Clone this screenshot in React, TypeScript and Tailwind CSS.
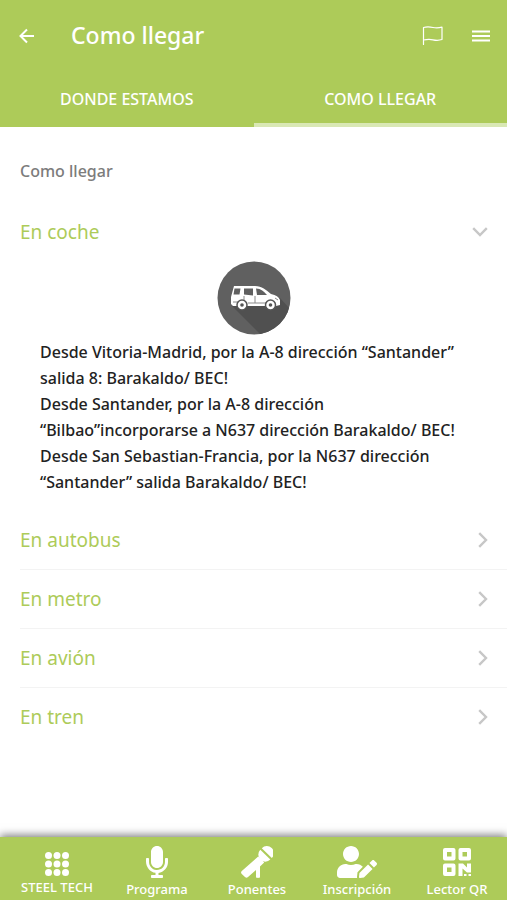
import { useState } from 'react';
import type { ReactNode } from 'react';
import { FaMicrophone, FaUserEdit } from 'react-icons/fa';

function BackIcon() {
  return (
    <svg viewBox="0 0 16 16" className="w-4 h-4" fill="none" stroke="currentColor" strokeWidth="2">
      <path d="M15 8H2M8 1.5 1.5 8 8 14.5" />
    </svg>
  );
}

function FlagIcon() {
  return (
    <svg viewBox="0 0 22 20" className="w-[22px] h-5" fill="none" stroke="currentColor" strokeWidth="1.2" strokeLinecap="round" strokeLinejoin="round">
      <path d="M1.500 18.500V1.500C5 .5 8 .8 11 1.500s6 .5 9-.3V13.500c-3 1-6 1-9 .3s-6-.6-9.500.2" />
    </svg>
  );
}

function MenuIcon() {
  return (
    <svg viewBox="0 0 18 14" className="w-[18px] h-3.5" stroke="currentColor" strokeWidth="2">
      <path d="M0 2.500h18M0 7h18M0 11.500h18" />
    </svg>
  );
}

function Chevron({ open }: { open: boolean }) {
  return open ? (
    <svg viewBox="0 0 16 10" className="w-4 h-2.5" fill="none" stroke="#c7c7c7" strokeWidth="2.400">
      <path d="m1.200 1.200 6.800 6.800 6.800-6.800" />
    </svg>
  ) : (
    <svg viewBox="0 0 10 16" className="w-2.5 h-4" fill="none" stroke="#c7c7c7" strokeWidth="2.400">
      <path d="m1.200 1.200 6.800 6.800-6.800 6.800" />
    </svg>
  );
}

function CarIcon() {
  return (
    <svg viewBox="0 0 74 74" className="w-[74px] h-[74px]">
      <clipPath id="disc">
        <circle cx="37" cy="37" r="36.500" />
      </clipPath>
      <circle cx="37" cy="37" r="36.500" fill="#606060" />
      <path clipPath="url(#disc)" fill="#505050" d="M15 45 44 74H74V49L63 37Z" />
      <path fill="#fff" d="M17 25h21c7 0 11 4 16 8 5 1 8 3 9 6v5l-4 1H16l-2-2v-7z" />
      <path fill="#606060" d="M17.500 27.500h6l-1 6h-6zM27 27.500h9v7l-9-1zM39 27.500c5 0 8 3 11 6.500h-10z" />
      <path fill="none" stroke="#8a8a8a" strokeWidth="1" d="M16 41h6M27 35v6M38 35v7M31 42h18M58 37l3 2" />
      <g fill="#fff" stroke="#555" strokeWidth="1.500">
        <circle cx="25" cy="44" r="5" />
        <circle cx="53.500" cy="44" r="5" />
      </g>
      <g fill="#555">
        <circle cx="25" cy="44" r="1.800" />
        <circle cx="53.500" cy="44" r="1.800" />
      </g>
    </svg>
  );
}

function DotsIcon() {
  return (
    <svg viewBox="0 0 24 24" className="w-6 h-6" fill="currentColor">
      {[3.5, 12, 20.5].map((y) => [3.5, 12, 20.5].map((x) => <circle key={`${x}-${y}`} cx={x} cy={y} r="3.500" />))}
    </svg>
  );
}

function HandMicIcon() {
  return (
    <svg viewBox="0 0 32 32" className="w-8 h-8" fill="currentColor">
      <path d="M20.800 2.200A7 7 0 0 1 30.800 12z" />
      <path d="M19.300 3.800 29.300 13.600A7 7 0 0 1 19.300 3.800z" />
      <path d="m17.200 10.500 6 6-4.200 4v10.500c0 1.200-4 1.200-4 0v-7l-8 7c-1 1-2 1-3 0L.8 28c-1-1-1-2 0-3z" />
    </svg>
  );
}

function QrIcon() {
  return (
    <svg viewBox="0 0 28 28" className="w-7 h-7 mb-0.5" fill="currentColor">
      <g fill="none" stroke="currentColor" strokeWidth="4" strokeLinejoin="round">
        <rect x="2" y="2" width="8.500" height="8.500" />
        <rect x="17.500" y="2" width="8.500" height="8.500" />
        <rect x="2" y="17.500" width="8.500" height="8.500" />
      </g>
      <path d="M15.500 15.500H20l4 4v-4h4v9h-4l-4.500-4V28h-4zM21 26h2.500v2H21zM25.500 26H28v2h-2.500z" />
    </svg>
  );
}

const sections = [
  {
    title: 'En coche',
    routes: [
      'Desde Vitoria-Madrid, por la A-8 dirección “Santander” salida 8: Barakaldo/ BEC!',
      'Desde Santander, por la A-8 dirección “Bilbao”incorporarse a N637 dirección Barakaldo/ BEC!',
      'Desde San Sebastian-Francia, por la N637 dirección “Santander” salida Barakaldo/ BEC!',
    ],
  },
  { title: 'En autobus', routes: [] },
  { title: 'En metro', routes: [] },
  { title: 'En avión', routes: [] },
  { title: 'En tren', routes: [] },
];

const navItems: { label: string; icon: ReactNode }[] = [
  { label: 'STEEL TECH', icon: <DotsIcon /> },
  { label: 'Programa', icon: <FaMicrophone className="w-8 h-8" /> },
  { label: 'Ponentes', icon: <HandMicIcon /> },
  { label: 'Inscripción', icon: <FaUserEdit className="w-10 h-8" /> },
  { label: 'Lector QR', icon: <QrIcon /> },
];

export default function App() {
  const [openTitle, setOpenTitle] = useState('En coche');
  const [tab, setTab] = useState('COMO LLEGAR');

  return (
    <div className="flex flex-col min-h-screen bg-white font-['Noto_Sans',sans-serif]">
      <header className="bg-[#adcb59] text-white">
        <div className="flex items-center h-[71px] pl-[19px] pr-[17px]">
          <button aria-label="Volver">
            <BackIcon />
          </button>
          <h1 className="flex-1 ml-9 text-[23px] font-medium">Como llegar</h1>
          <button aria-label="Marcar" className="mr-7">
            <FlagIcon />
          </button>
          <button aria-label="Menú">
            <MenuIcon />
          </button>
        </div>
        <div className="grid grid-cols-2">
          {['DONDE ESTAMOS', 'COMO LLEGAR'].map((name) => (
            <button
              key={name}
              onClick={() => setTab(name)}
              className={`h-14 pt-1 border-b-4 text-base font-medium ${tab === name ? 'border-[#d9e8b4]' : 'border-transparent'}`}
            >
              {name}
            </button>
          ))}
        </div>
      </header>

      <main className="flex-1 pt-8">
        <h2 className="pl-5 text-base font-medium text-[#7c7c7c]">Como llegar</h2>
        <div className="mt-5">
          {sections.map(({ title, routes }) => {
            const open = openTitle === title;
            return (
              <section key={title} className={`ml-5 last:border-0 ${open ? '' : 'border-b border-[#f3f3f3]'}`}>
                <button
                  aria-expanded={open}
                  onClick={() => setOpenTitle(open ? '' : title)}
                  className="flex items-center justify-between w-full h-[58px] pr-[19px] text-[19px] text-[#adcb59]"
                >
                  {title}
                  <Chevron open={open} />
                </button>
                {open && routes.length > 0 && (
                  <div className="pl-5 pr-9 pb-4 text-base leading-[26px] font-medium text-[#222]">
                    <div className="flex justify-center pr-1 mb-1">
                      <CarIcon />
                    </div>
                    {routes.map((route) => (
                      <p key={route}>{route}</p>
                    ))}
                  </div>
                )}
              </section>
            );
          })}
        </div>
      </main>

      <nav className="sticky bottom-0 grid grid-cols-5 h-[63px] pl-[7px] bg-[#adcb59] text-white shadow-[0_-2px_8px_rgba(0,0,0,0.5)]">
        {navItems.map(({ label, icon }) => (
          <button
            key={label}
            className="flex flex-col items-center justify-end gap-0.5 pb-0.5 first:pb-1 text-[13px] leading-[18px] font-medium whitespace-nowrap"
          >
            {icon}
            {label}
          </button>
        ))}
      </nav>
    </div>
  );
}
